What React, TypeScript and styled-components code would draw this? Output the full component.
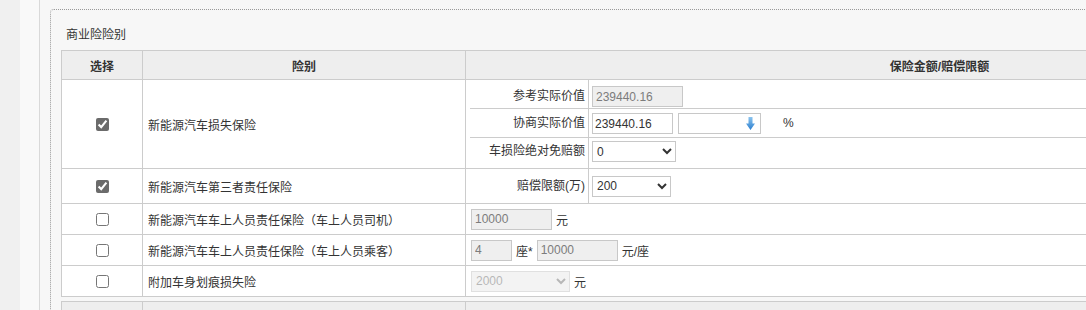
import React from 'react';
import styled, { createGlobalStyle } from 'styled-components';

const GlobalStyle = createGlobalStyle`
  html, body {
    margin: 0;
    padding: 0;
    overflow: hidden;
    background: #f7f7f7;
  }
  body {
    font-family: "Liberation Sans", "Noto Sans CJK SC", sans-serif;
    font-size: 12px;
    color: #333;
  }
`;

const Page = styled.div`
  display: flex;
  height: 310px;
`;

const Rail = styled.div`
  flex: none;
  width: 20px;
  background: #f0f0f0;
`;

const Gutter = styled.div`
  flex: none;
  width: 19px;
  background: #f9f9f9;
  border-right: 1px solid #d9d9d9;
`;

const Main = styled.div`
  flex: none;
  padding: 9px 0 0 10px;
`;

const Panel = styled.div`
  width: 1400px;
  border: 1px dotted #999;
  border-radius: 4px;
  padding-left: 10px;
  background: #f7f7f7;
`;

const Title = styled.div`
  padding: 17px 0 7px 5px;
  line-height: 16px;
`;

const Grid = styled.div<{ $gap?: number }>`
  display: grid;
  grid-template-columns: 81px 323px 948px;
  width: max-content;
  border-top: 1px solid #ccc;
  border-left: 1px solid #ccc;
  margin-top: ${p => p.$gap || 0}px;
`;

const HeadCell = styled.div`
  box-sizing: border-box;
  height: 29px;
  display: flex;
  align-items: center;
  justify-content: center;
  background: #eee;
  border-right: 1px solid #ccc;
  border-bottom: 1px solid #ccc;
  font-weight: bold;
  color: #333;
`;

const Cell = styled.div<{ $h: number; $center?: boolean; $pad?: number }>`
  box-sizing: border-box;
  height: ${p => p.$h}px;
  display: flex;
  align-items: center;
  justify-content: ${p => (p.$center ? 'center' : 'flex-start')};
  padding-left: ${p => p.$pad || 0}px;
  background: #fff;
  border-right: 1px solid #ccc;
  border-bottom: 1px solid #ccc;
  gap: 4px;
`;

const InnerCell = styled(Cell)`
  display: block;
  padding-left: 4px;
`;

const Inner = styled.div<{ $rows: string }>`
  display: grid;
  grid-template-columns: 119px 1fr;
  grid-template-rows: ${p => p.$rows};
  height: 100%;
`;

const SubLabel = styled.div<{ $top?: number; $line?: boolean }>`
  box-sizing: border-box;
  display: flex;
  justify-content: flex-end;
  align-items: ${p => (p.$top === undefined ? 'center' : 'flex-start')};
  padding: ${p => p.$top || 0}px 3px 0 0;
  line-height: 21px;
  border-right: 1px solid #ccc;
  border-bottom: ${p => (p.$line ? '1px solid #ccc' : 'none')};
  white-space: nowrap;
`;

const SubValue = styled.div<{ $top?: number; $line?: boolean }>`
  box-sizing: border-box;
  display: flex;
  align-items: ${p => (p.$top === undefined ? 'center' : 'flex-start')};
  padding: ${p => p.$top || 0}px 0 0 3px;
  line-height: 21px;
  border-bottom: ${p => (p.$line ? '1px solid #ccc' : 'none')};
  gap: 5px;
`;

const Check = styled.input`
  width: 13px;
  height: 13px;
  margin: 0;
  accent-color: #6b6b6b;
`;

const TextBox = styled.input<{ $w: number }>`
  box-sizing: border-box;
  width: ${p => p.$w}px;
  height: 21px;
  margin: 0;
  padding: 0 0 0 2px;
  border: 1px solid #c8c8c8;
  border-radius: 0;
  background: #fff;
  color: #333;
  font: 12px "Liberation Sans", "Noto Sans CJK SC", sans-serif;
  &:disabled {
    background: #efefef;
    color: #7c7c7c;
    padding-left: 3px;
  }
`;

const Picker = styled.select<{ $w: number }>`
  box-sizing: border-box;
  width: ${p => p.$w}px;
  height: 21px;
  margin: 0;
  border: 1px solid #c8c8c8;
  border-radius: 0;
  background: #fff;
  color: #333;
  font: 12px "Liberation Sans", "Noto Sans CJK SC", sans-serif;
  &:disabled {
    background: #efefef;
    color: #9a9a9a;
    border-color: #d4d4d4;
  }
`;

const Combo = styled.div`
  box-sizing: border-box;
  width: 83px;
  height: 21px;
  display: flex;
  align-items: center;
  justify-content: flex-end;
  padding-right: 5px;
  border: 1px solid #c8c8c8;
  background: #fff;
`;

const Unit = styled.span<{ $left?: number }>`
  margin-left: ${p => p.$left || 0}px;
  white-space: nowrap;
`;

const Name = styled.span`
  white-space: nowrap;
`;

const DownArrow = () => (
  <svg width="9" height="13" viewBox="0 0 9 13">
    <defs>
      <linearGradient id="arr" x1="0" y1="0" x2="0" y2="1">
        <stop offset="0" stopColor="#8cc4ee" />
        <stop offset="1" stopColor="#2b7fd0" />
      </linearGradient>
    </defs>
    <path d="M2.5 0 H6.5 V6.5 H9 L4.5 13 L0 6.5 H2.5 Z" fill="url(#arr)" />
  </svg>
);

const rows = [
  { name: '新能源汽车车上人员责任保险（车上人员司机）', kind: 'driver' },
  { name: '新能源汽车车上人员责任保险（车上人员乘客）', kind: 'seat' },
  { name: '附加车身划痕损失险', kind: 'scratch' },
];

export default function App() {
  const rest = (kind: string) => {
    if (kind === 'driver') {
      return (
        <>
          <TextBox $w={81} disabled defaultValue="10000" />
          <Unit>元</Unit>
        </>
      );
    }
    if (kind === 'seat') {
      return (
        <>
          <TextBox $w={41} disabled defaultValue="4" />
          <Unit>座*</Unit>
          <TextBox $w={81} disabled defaultValue="10000" />
          <Unit>元/座</Unit>
        </>
      );
    }
    return (
      <>
        <Picker $w={99} disabled defaultValue="2000">
          <option>2000</option>
        </Picker>
        <Unit>元</Unit>
      </>
    );
  };

  return (
    <>
      <GlobalStyle />
      <Page>
        <Rail />
        <Gutter />
        <Main>
          <Panel>
            <Title>商业险险别</Title>
            <Grid>
              <HeadCell>选择</HeadCell>
              <HeadCell>险别</HeadCell>
              <HeadCell>保险金额/赔偿限额</HeadCell>

              <Cell $h={89} $center>
                <Check type="checkbox" defaultChecked />
              </Cell>
              <Cell $h={89} $pad={5}>
                <Name>新能源汽车损失保险</Name>
              </Cell>
              <InnerCell $h={89}>
                <Inner $rows="29px 29px 1fr">
                  <SubLabel $top={6} $line>参考实际价值</SubLabel>
                  <SubValue $top={6} $line>
                    <TextBox $w={91} disabled defaultValue="239440.16" />
                  </SubValue>
                  <SubLabel $top={4} $line>协商实际价值</SubLabel>
                  <SubValue $top={4} $line>
                    <TextBox $w={81} defaultValue="239440.16" />
                    <Combo>
                      <DownArrow />
                    </Combo>
                    <Unit $left={17}>%</Unit>
                  </SubValue>
                  <SubLabel $top={3}>车损险绝对免赔额</SubLabel>
                  <SubValue $top={3}>
                    <Picker $w={84} defaultValue="0">
                      <option>0</option>
                    </Picker>
                  </SubValue>
                </Inner>
              </InnerCell>

              <Cell $h={35} $center>
                <Check type="checkbox" defaultChecked />
              </Cell>
              <Cell $h={35} $pad={5}>
                <Name>新能源汽车第三者责任保险</Name>
              </Cell>
              <InnerCell $h={35}>
                <Inner $rows="1fr">
                  <SubLabel>赔偿限额(万)</SubLabel>
                  <SubValue>
                    <Picker $w={79} defaultValue="200">
                      <option>200</option>
                    </Picker>
                  </SubValue>
                </Inner>
              </InnerCell>

              {rows.map(r => (
                <React.Fragment key={r.kind}>
                  <Cell $h={31} $center>
                    <Check type="checkbox" />
                  </Cell>
                  <Cell $h={31} $pad={5}>
                    <Name>{r.name}</Name>
                  </Cell>
                  <Cell $h={31} $pad={5}>
                    {rest(r.kind)}
                  </Cell>
                </React.Fragment>
              ))}
            </Grid>
            <Grid $gap={4}>
              <HeadCell />
              <HeadCell />
              <HeadCell />
            </Grid>
          </Panel>
        </Main>
      </Page>
    </>
  );
}
